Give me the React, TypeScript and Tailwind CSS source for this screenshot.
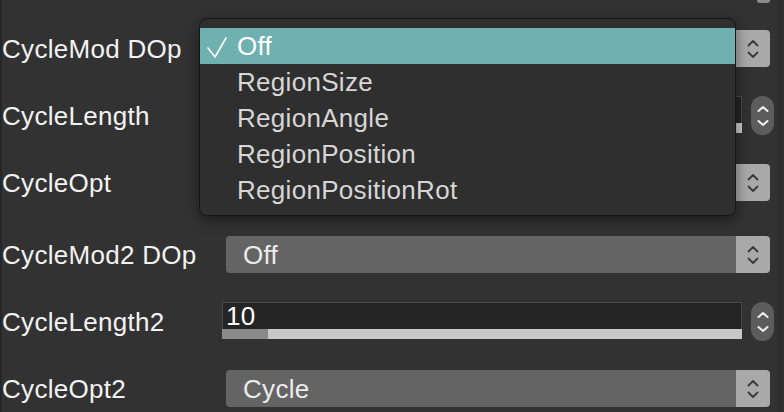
import React from 'react';

const options = ['Off', 'RegionSize', 'RegionAngle', 'RegionPosition', 'RegionPositionRot'];

// 선택 박스 오른쪽 화살표
function SelectChevrons() {
  return (
    <svg width="12" height="20" viewBox="0 0 12 20" fill="none" stroke="#3a3a3a" strokeWidth={1.8} strokeLinecap="round" strokeLinejoin="round">
      <path d="M1.5 6.5 L6 2 L10.5 6.5" />
      <path d="M1.5 13.5 L6 18 L10.5 13.5" />
    </svg>
  );
}

function PillChevrons() {
  return (
    <svg width="12" height="22" viewBox="0 0 12 22" fill="none" stroke="#f0f0f0" strokeWidth={2} strokeLinecap="round" strokeLinejoin="round">
      <path d="M1.5 6 L6 2 L10.5 6" />
      <path d="M1.5 16 L6 20 L10.5 16" />
    </svg>
  );
}

function Label({ text }: { text: string }) {
  return <div className="w-[220px] shrink-0 self-center leading-none text-[#f2f2f2]">{text}</div>;
}

function SelectRow({ label, value, className = '' }: { label: string; value: string; className?: string }) {
  return (
    <div className={`flex h-[37px] ${className}`}>
      <Label text={label} />
      <div className="ml-[4px] flex h-[37px] w-[544px] overflow-hidden rounded-[4px]">
        <div className="flex flex-1 items-center bg-[#646464] pl-[17px] leading-none text-[#ececec]">{value}</div>
        <div className="flex w-[34px] items-center justify-center bg-[#a9a9a9]">
          <SelectChevrons />
        </div>
      </div>
    </div>
  );
}

function NumberRow({ label, value, className = '' }: { label: string; value: string; className?: string }) {
  return (
    <div className={`flex h-[40px] items-start ${className}`}>
      <Label text={label} />
      <div className="flex w-[520px] flex-col">
        <div className="flex h-[27px] items-center border-x border-t border-[#4a4a4a] bg-[#242424] pl-[3px] leading-none text-white">
          {value}
        </div>
        <div className="flex h-[10px] bg-[#c8c8c8]">
          <div className="w-[46px] bg-[#8a8a8a]" />
        </div>
      </div>
      <div className="ml-[9px] flex h-[39px] w-[23px] items-center justify-center rounded-full bg-[#5c5c5c]">
        <PillChevrons />
      </div>
    </div>
  );
}

export default function App() {
  return (
    <div
      className="relative h-[412px] w-[784px] overflow-hidden border-l-2 border-[#262626] bg-[#323232] text-[26px] tracking-[0.3px]"
      style={{ fontFamily: '"Liberation Sans", Arial, sans-serif' }}
    >
      <div className="absolute right-0 top-0 h-full w-[7px] bg-[#2e2e2e]" />
      <div className="absolute left-[755px] top-0 h-[3px] w-[13px] rounded-b-[3px] bg-[#8c8c8c]" />

      {/* 속성 목록 */}
      <div className="flex flex-col pt-[30px]">
        <SelectRow label="CycleMod DOp" value="Off" />
        <NumberRow label="CycleLength" value="10" className="mt-[29px]" />
        <SelectRow label="CycleOpt" value="Cycle" className="mt-[28px]" />
        <SelectRow label="CycleMod2 DOp" value="Off" className="mt-[35px]" />
        <NumberRow label="CycleLength2" value="10" className="mt-[29px]" />
        <SelectRow label="CycleOpt2" value="Cycle" className="mt-[28px]" />
      </div>

      {/* 드롭다운 메뉴 */}
      <div className="absolute left-[197px] top-[18px] h-[198px] w-[537px] rounded-[8px] border border-[#171717] bg-[#2f2f2f] pt-[9px] shadow-[0_4px_14px_rgba(0,0,0,0.45)]">
        {options.map((opt, i) => (
          <div
            key={opt}
            className={`relative flex h-[36px] items-center pl-[37px] leading-none ${
              i === 0 ? 'bg-[#6fb0b0] text-white' : 'text-[#d6d6d6]'
            }`}
          >
            {i === 0 && (
              <svg className="absolute left-[7px] top-[9px]" width="20" height="22" viewBox="0 0 20 22" fill="none" stroke="#ffffff" strokeWidth={1.6} strokeLinecap="round" strokeLinejoin="round">
                <path d="M1 11 L8 20 L19 1" />
              </svg>
            )}
            {opt}
          </div>
        ))}
      </div>
    </div>
  );
}
